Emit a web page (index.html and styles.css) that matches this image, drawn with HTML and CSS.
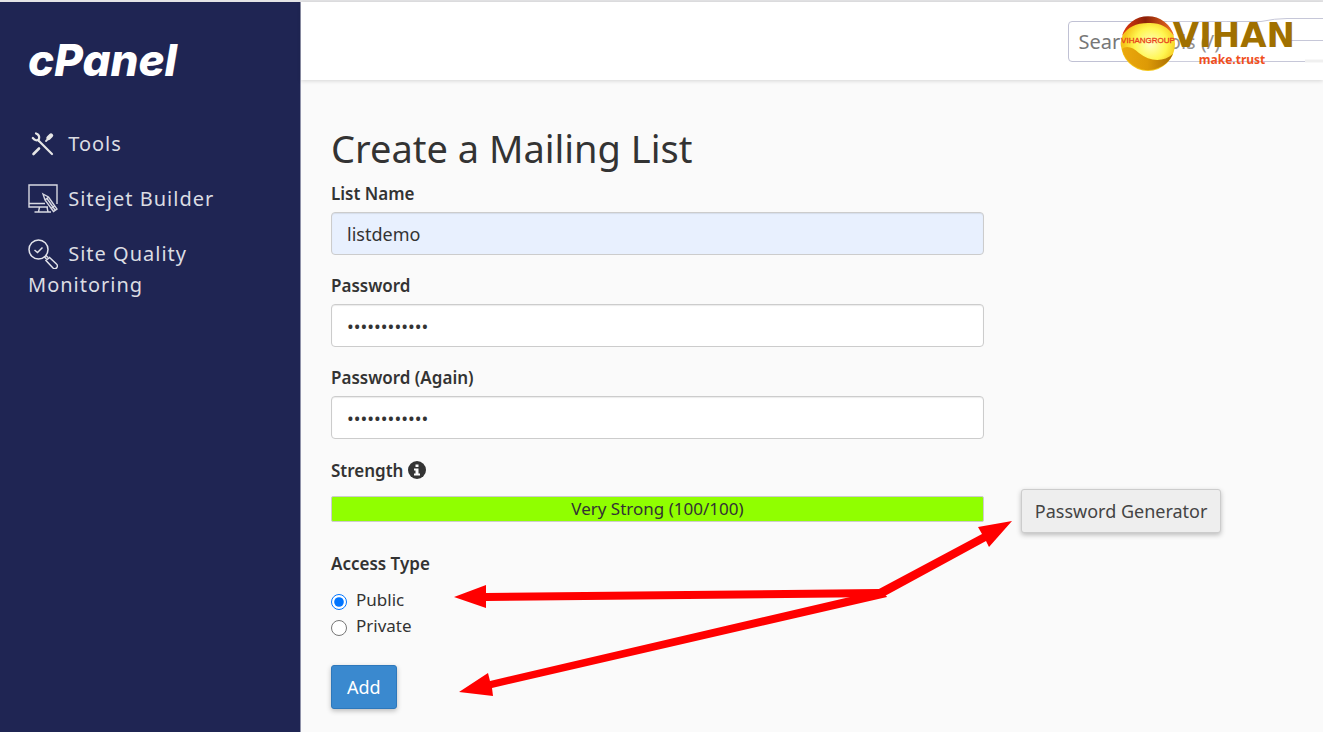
FILE: index.html
```html
<!DOCTYPE html>
<html lang="en">
<head>
    <meta charset="UTF-8">
    <meta name="viewport" content="width=device-width, initial-scale=1.0">
    <title>Create a Mailing List</title>
    <link rel="stylesheet" href="styles.css">
</head>
<body>
    <div class="page">
        <nav class="sidebar">
            <a class="logo" href="#">cPanel</a>
            <a class="nav-link" href="#">
                <svg class="nav-icon" viewBox="0 0 30 30">
                    <g fill="none" stroke="#e6e6e6" stroke-linecap="round">
                        <path d="M10.500 11.500L24 25" stroke-width="2.200"/>
                        <path d="M5.500 25L11 19.500" stroke-width="2.600"/>
                        <path d="M18 12L20 10" stroke-width="1.800"/>
                        <path d="M20.500 9L23 6.500" stroke-width="4.400"/>
                        <path d="M8 4.500Q12 6 11 10Q8 13 4.800 9" stroke-width="2.200"/>
                    </g>
                </svg>
                Tools
            </a>
            <a class="nav-link" href="#">
                <svg class="nav-icon" viewBox="0 0 30 30">
                    <g fill="none" stroke="#d8d9e2" stroke-width="1.400">
                        <path d="M29 20V1H1V23H20M1 19.500H17M11.500 23L10.500 28M19 23L20 28M6.500 28H23"/>
                        <path d="M15 10L20.500 13L29 25L25.500 27.500L17 16ZM17 16L20.500 13M19 14.500L27 26M23 24.500L27 21.500"/>
                    </g>
                </svg>
                Sitejet Builder
            </a>
            <a class="nav-link" href="#">
                <svg class="nav-icon" viewBox="0 0 30 30">
                    <g fill="none" stroke="#e2e3ea" stroke-width="1.500">
                        <circle cx="10.500" cy="10.500" r="9.500"/>
                        <path d="M6.500 11L9.500 13.500L14.500 8.500M16.500 18L18.500 20M18 16.500L20 18.500"/>
                        <path d="M18 21.500L21.500 18.500L28.500 25A2.500 2.500 0 0 1 25 29Z"/>
                    </g>
                </svg>
                Site Quality Monitoring
            </a>
        </nav>

        <div class="main">
            <header class="topbar">
                <input class="search" type="text" placeholder="Search Tools (/)" aria-label="Search Tools">
                <div class="brand">
                    <svg class="brand-fade" viewBox="0 0 156 50">
                        <path d="M0 6H70L100 4L120 1H156V45H138L130 48H0Z" fill="#fff" fill-opacity="0.2"/>
                        <path d="M62 5L96 5L120 1H156V48H138L128 44H62Z" fill="#fff"/>
                        <path d="M60 6.500H94Q108 3.500 120 3.500H156M124 25.500H156M60 46.500H138" fill="none" stroke="#c6c7d8"/>
                        <path d="M138 46H156" stroke="#f0f0f0" stroke-width="3"/>
                    </svg>
                    <svg class="brand-orb" viewBox="0 0 56 56">
                        <defs>
                            <radialGradient id="orbYellow" cx="0.550" cy="0.500" r="0.500">
                                <stop offset="0" stop-color="#fffec0"/>
                                <stop offset="0.600" stop-color="#fff650"/>
                                <stop offset="1" stop-color="#f5c518"/>
                            </radialGradient>
                            <linearGradient id="orbRed" x1="0" y1="0" x2="1" y2="0">
                                <stop offset="0" stop-color="#e03a10"/>
                                <stop offset="0.450" stop-color="#8c2008"/>
                                <stop offset="1" stop-color="#f07020"/>
                            </linearGradient>
                            <linearGradient id="orbGold" x1="0" y1="0" x2="1" y2="0">
                                <stop offset="0" stop-color="#eba80c"/>
                                <stop offset="0.500" stop-color="#dd9a06"/>
                                <stop offset="1" stop-color="#a86c04"/>
                            </linearGradient>
                        </defs>
                        <circle cx="28" cy="28" r="27" fill="url(#orbYellow)"/>
                        <path d="M2 20A27 27 0 0 1 54 20Q45 6 28 7Q10 7 2 20Z" fill="url(#orbRed)"/>
                        <path d="M2 33C6 29 13 31 19 37C30 46 44 46 53 38A27 27 0 0 1 2 33Z" fill="url(#orbGold)"/>
                        <text class="orb-text" x="28" y="27" text-anchor="middle">VIHANGROUP</text>
                    </svg>
                    <div class="brand-words">
                        <strong>VIHAN</strong>
                        <span>make.trust</span>
                    </div>
                </div>
            </header>

            <div class="content">
                <h1>Create a Mailing List</h1>
                <form class="list-form">
                    <div class="field">
                        <label for="listname">List Name</label>
                        <input class="filled" type="text" id="listname" value="listdemo">
                    </div>
                    <div class="field">
                        <label for="password">Password</label>
                        <input type="password" id="password" value="abcdefghijkl">
                    </div>
                    <div class="field">
                        <label for="password2">Password (Again)</label>
                        <input type="password" id="password2" value="abcdefghijkl">
                    </div>
                    <div class="field strength">
                        <span class="label">
                            Strength
                            <svg class="info" viewBox="0 0 18 18">
                                <circle cx="9" cy="9" r="9" fill="#333"/>
                                <path d="M7.500 3.500H10.500V6H7.500ZM6 7.500H10.500V12.500H12V14.500H6V12.500H7.500V9.500H6Z" fill="#fafafa"/>
                            </svg>
                        </span>
                        <div class="meter">Very Strong (100/100)</div>
                    </div>
                    <button class="generator" type="button">Password Generator</button>
                    <fieldset class="access">
                        <legend>Access Type</legend>
                        <label><input type="radio" name="access" checked>Public</label>
                        <label><input type="radio" name="access">Private</label>
                    </fieldset>
                    <button class="add" type="submit">Add</button>
                </form>

                <!-- arrows pointing at the generator, access type and add button -->
                <svg class="arrows" viewBox="0 0 570 190">
                    <g fill="#f00">
                        <path d="M4 87L36 75V83L429 79L437 87L36 91V98Z"/>
                        <path d="M9 182L38 163L40 171L430 80L437 87L42 178L43 186Z"/>
                        <path d="M562 11L528 17L532 24L427 80L433 87L536 31L539 37Z"/>
                    </g>
                </svg>
            </div>
        </div>
    </div>
</body>
</html>
```
FILE: styles.css
```css
*{
    box-sizing: border-box;
}
body{
    margin: 0;
    font-family: "Noto Sans", sans-serif;
    font-size: 17px;
    line-height: 26px;
    color: #333;
    background-color: white;
}
.page{
    display: flex;
    min-height: calc(100vh - 2px);
    border-top: 2px solid #e4e4e6;
}
.sidebar{
    flex: 0 0 301px;
    padding: 32px 28px;
    background-color: #1f2553;
    border-right: 1px solid #8f92a9;
}
.logo{
    display: block;
    margin-bottom: 42px;
    font-family: Inter, sans-serif;
    font-size: 44px;
    font-weight: 800;
    font-style: italic;
    line-height: 52px;
    color: white;
    text-decoration: none;
}
.nav-link{
    display: block;
    margin-bottom: 24px;
    font-size: 20px;
    line-height: 31px;
    letter-spacing: 1px;
    color: #dcdde3;
    text-decoration: none;
}
.nav-icon{
    width: 30px;
    height: 30px;
    margin: -6px 4px -6px 0;
    vertical-align: -2px;
}
.main{
    flex: 1;
    min-width: 0;
    background-color: #fafafa;
}
.topbar{
    position: relative;
    height: 78px;
    padding-top: 19px;
    background-color: white;
    box-shadow: 0 1px 4px rgba(0, 0, 0, 0.15);
    overflow: hidden;
}
.search{
    display: block;
    width: 300px;
    height: 41px;
    margin-left: 75%;
    padding: 0 10px;
    border: 1px solid #c0c1d4;
    border-radius: 4px;
    font-family: "Noto Sans", sans-serif;
    font-size: 20px;
}
.search::placeholder{
    color: #777;
}
.brand{
    position: absolute;
    top: 14px;
    right: 28px;
    display: flex;
}
.brand-fade{
    position: absolute;
    top: -1px;
    right: -28px;
    width: 156px;
    height: 50px;
}
.brand-orb{
    position: relative;
    width: 56px;
    height: 56px;
}
.orb-text{
    font-family: "Liberation Sans", sans-serif;
    font-size: 8px;
    fill: #e8401c;
    stroke: #e8401c;
    stroke-width: 0.3px;
}
.brand-words{
    position: relative;
    display: flex;
    flex-direction: column;
    margin-left: -3px;
}
.brand-words strong{
    font-family: "DejaVu Sans", sans-serif;
    font-size: 34px;
    font-weight: 700;
    line-height: 38px;
    color: #a07000;
}
.brand-words span{
    margin-left: 26px;
    font-size: 12px;
    font-weight: 700;
    line-height: 12px;
    color: #f0501e;
}
.content{
    position: relative;
    padding: 38px 32px 20px 30px;
}
h1{
    margin: 0 0 3px;
    font-size: 38px;
    font-weight: 400;
    line-height: 60px;
}
.list-form{
    display: grid;
    grid-template-columns: 68% 1fr;
    column-gap: 37px;
    align-items: end;
}
.field{
    grid-column: 1;
    display: flex;
    flex-direction: column;
    margin-bottom: 18px;
}
.field label,
.label,
legend{
    margin-bottom: 5px;
    padding: 0;
    font-weight: 600;
}
.field input{
    height: 43px;
    padding: 0 15px;
    border: 1px solid #ccc;
    border-radius: 4px;
    font-family: "Noto Sans", sans-serif;
    font-size: 18px;
    color: #333;
    background-color: white;
    box-shadow: inset 0 1px 1px rgba(0, 0, 0, 0.08);
}
.field .filled{
    background-color: #e8f0fe;
}
.info{
    width: 18px;
    height: 18px;
    vertical-align: -2px;
}
.strength{
    margin: 1px 0 12px;
}
.strength .label{
    margin-bottom: 12px;
}
.meter{
    border: 1px solid #ccc;
    border-radius: 2px;
    line-height: 24px;
    text-align: center;
    background-color: #90ff00;
}
button{
    height: 44px;
    padding: 0 15px;
    border: 1px solid #ccc;
    border-radius: 3px;
    font-family: "Noto Sans", sans-serif;
    font-size: 18px;
    color: #444;
    background-color: #eee;
    box-shadow: 0 2px 5px rgba(0, 0, 0, 0.25);
    cursor: pointer;
}
.generator{
    grid-column: 2;
    justify-self: start;
    margin-bottom: 1px;
    padding: 0 13px;
}
.access{
    grid-column: 1;
    margin: 17px 0 26px;
    padding: 0;
    border: none;
}
legend{
    margin-bottom: 10px;
}
.access label{
    display: flex;
    align-items: center;
}
.access input{
    width: 16px;
    height: 16px;
    margin: 3px 9px 0 0;
}
.add{
    grid-column: 1;
    justify-self: start;
    border-color: #2e78bb;
    color: white;
    background-color: #3a89cf;
}
.arrows{
    position: absolute;
    top: 430px;
    left: 149px;
    width: 570px;
    height: 190px;
    pointer-events: none;
}
```
